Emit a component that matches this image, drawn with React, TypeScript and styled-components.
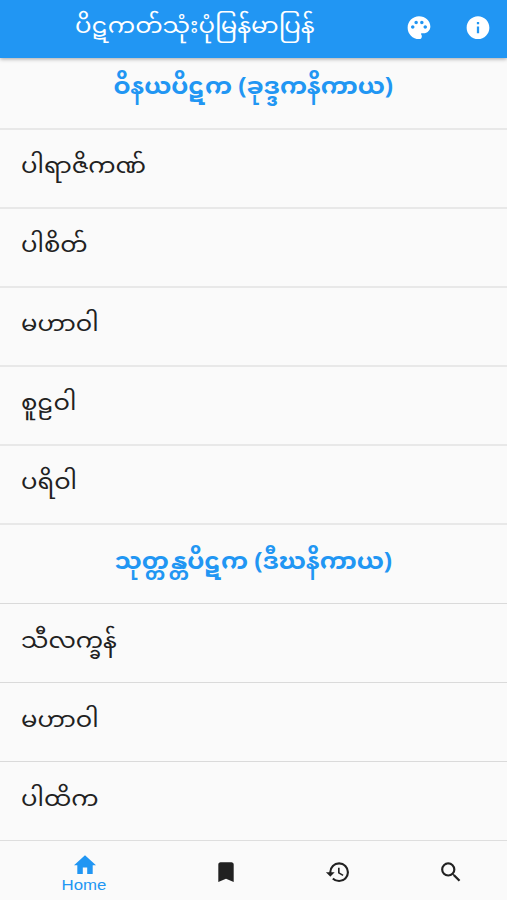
import React from "react";
import styled, { createGlobalStyle } from "styled-components";
import { MdPalette, MdInfo, MdHome, MdBookmark, MdHistory, MdSearch } from "react-icons/md";

const Global = createGlobalStyle`
  * { box-sizing: border-box; }
  body { margin: 0; background: #fafafa; font-family: "Noto Sans Myanmar", "Noto Sans", sans-serif; }
`;
const Screen = styled.div`
  height: 900px; display: flex; flex-direction: column; overflow: hidden; background: #fafafa;
`;
const AppBar = styled.header`
  height: 58px; flex: none; display: flex; align-items: center; background: #2196f3; color: #fff;
  padding: 0 14.5px 0 75px; box-shadow: 0 1px 4px rgba(0,0,0,.35); z-index: 1;
`;
const Title = styled.h1`
  margin: 0; flex: 1; font-size: 22.4px; font-weight: 400; line-height: 50px; white-space: nowrap;
  padding-bottom: 2px;
  transform: scaleX(1.09); transform-origin: left;
`;
const Actions = styled.div`
  display: flex; gap: 29px; align-items: center; padding-bottom: 2px;
  svg { width: 30px; height: 27.3px; }
`;
const List = styled.main`flex: 1; overflow: hidden;`;
const Rows = styled.div`margin-top: -7.4px;`;
const Row = styled.div<{ $heading?: boolean; $soft?: boolean }>`
  height: 79.08px; display: flex; align-items: center;
  border-bottom: ${p => (p.$soft ? "2px solid #e8e8e8" : "1px solid #dadada")};
  justify-content: ${p => (p.$heading ? "center" : "flex-start")};
  padding: 0 21px ${p => (p.$heading ? 1 : 2)}px; white-space: nowrap;
  color: ${p => (p.$heading ? "#2196f3" : "#212121")};
  font-weight: ${p => (p.$heading ? 700 : 400)};
`;
const Label = styled.span<{ $heading?: boolean }>`
  font-size: 22.4px; transform: scaleX(${p => (p.$heading ? 1.09 : 1.085)});
  transform-origin: ${p => (p.$heading ? "center" : "left")};
`;
const Nav = styled.nav`
  height: 60px; flex: none; display: grid; grid-template-columns: 169px 113px 112px 113px;
  background: #fafafa; border-top: 1px solid #dedede;
`;
const Item = styled.div<{ $active?: boolean }>`
  display: flex; flex-direction: column; align-items: center; justify-content: center;
  padding-top: 4px;
  color: ${p => (p.$active ? "#2196f3" : "#212121")};
  svg { width: 28px; height: 26.4px; flex: none; }
`;
const NavText = styled.span`
  font: 15px/16px "Liberation Sans", sans-serif; margin-top: -1px; transform: scaleX(1.12);
`;

const vinaya = ["ပါရာဇိကဏ်", "ပါစိတ်", "မဟာဝါ", "စူဠဝါ", "ပရိဝါ"];
const suttanta = ["သီလက္ခန်", "မဟာဝါ", "ပါထိက"];

function Section({ name, books, soft }: { name: string; books: string[]; soft?: boolean }) {
  return (
    <>
      <Row $heading $soft={soft}><Label $heading>{name}</Label></Row>
      {books.map(b => <Row key={b} $soft={soft}><Label>{b}</Label></Row>)}
    </>
  );
}

export default function App() {
  return (
    <Screen>
      <Global />
      <AppBar>
        <Title>ပိဋကတ်သုံးပုံမြန်မာပြန်</Title>
        <Actions><MdPalette /><MdInfo /></Actions>
      </AppBar>
      <List>
        <Rows>
          <Section name="ဝိနယပိဋက (ခုဒ္ဒကနိကာယ)" books={vinaya} soft />
          <Section name="သုတ္တန္တပိဋက (ဒီဃနိကာယ)" books={suttanta} />
        </Rows>
      </List>
      <Nav>
        <Item $active><MdHome /><NavText>Home</NavText></Item>
        <Item><MdBookmark /></Item>
        <Item><MdHistory /></Item>
        <Item><MdSearch /></Item>
      </Nav>
    </Screen>
  );
}
